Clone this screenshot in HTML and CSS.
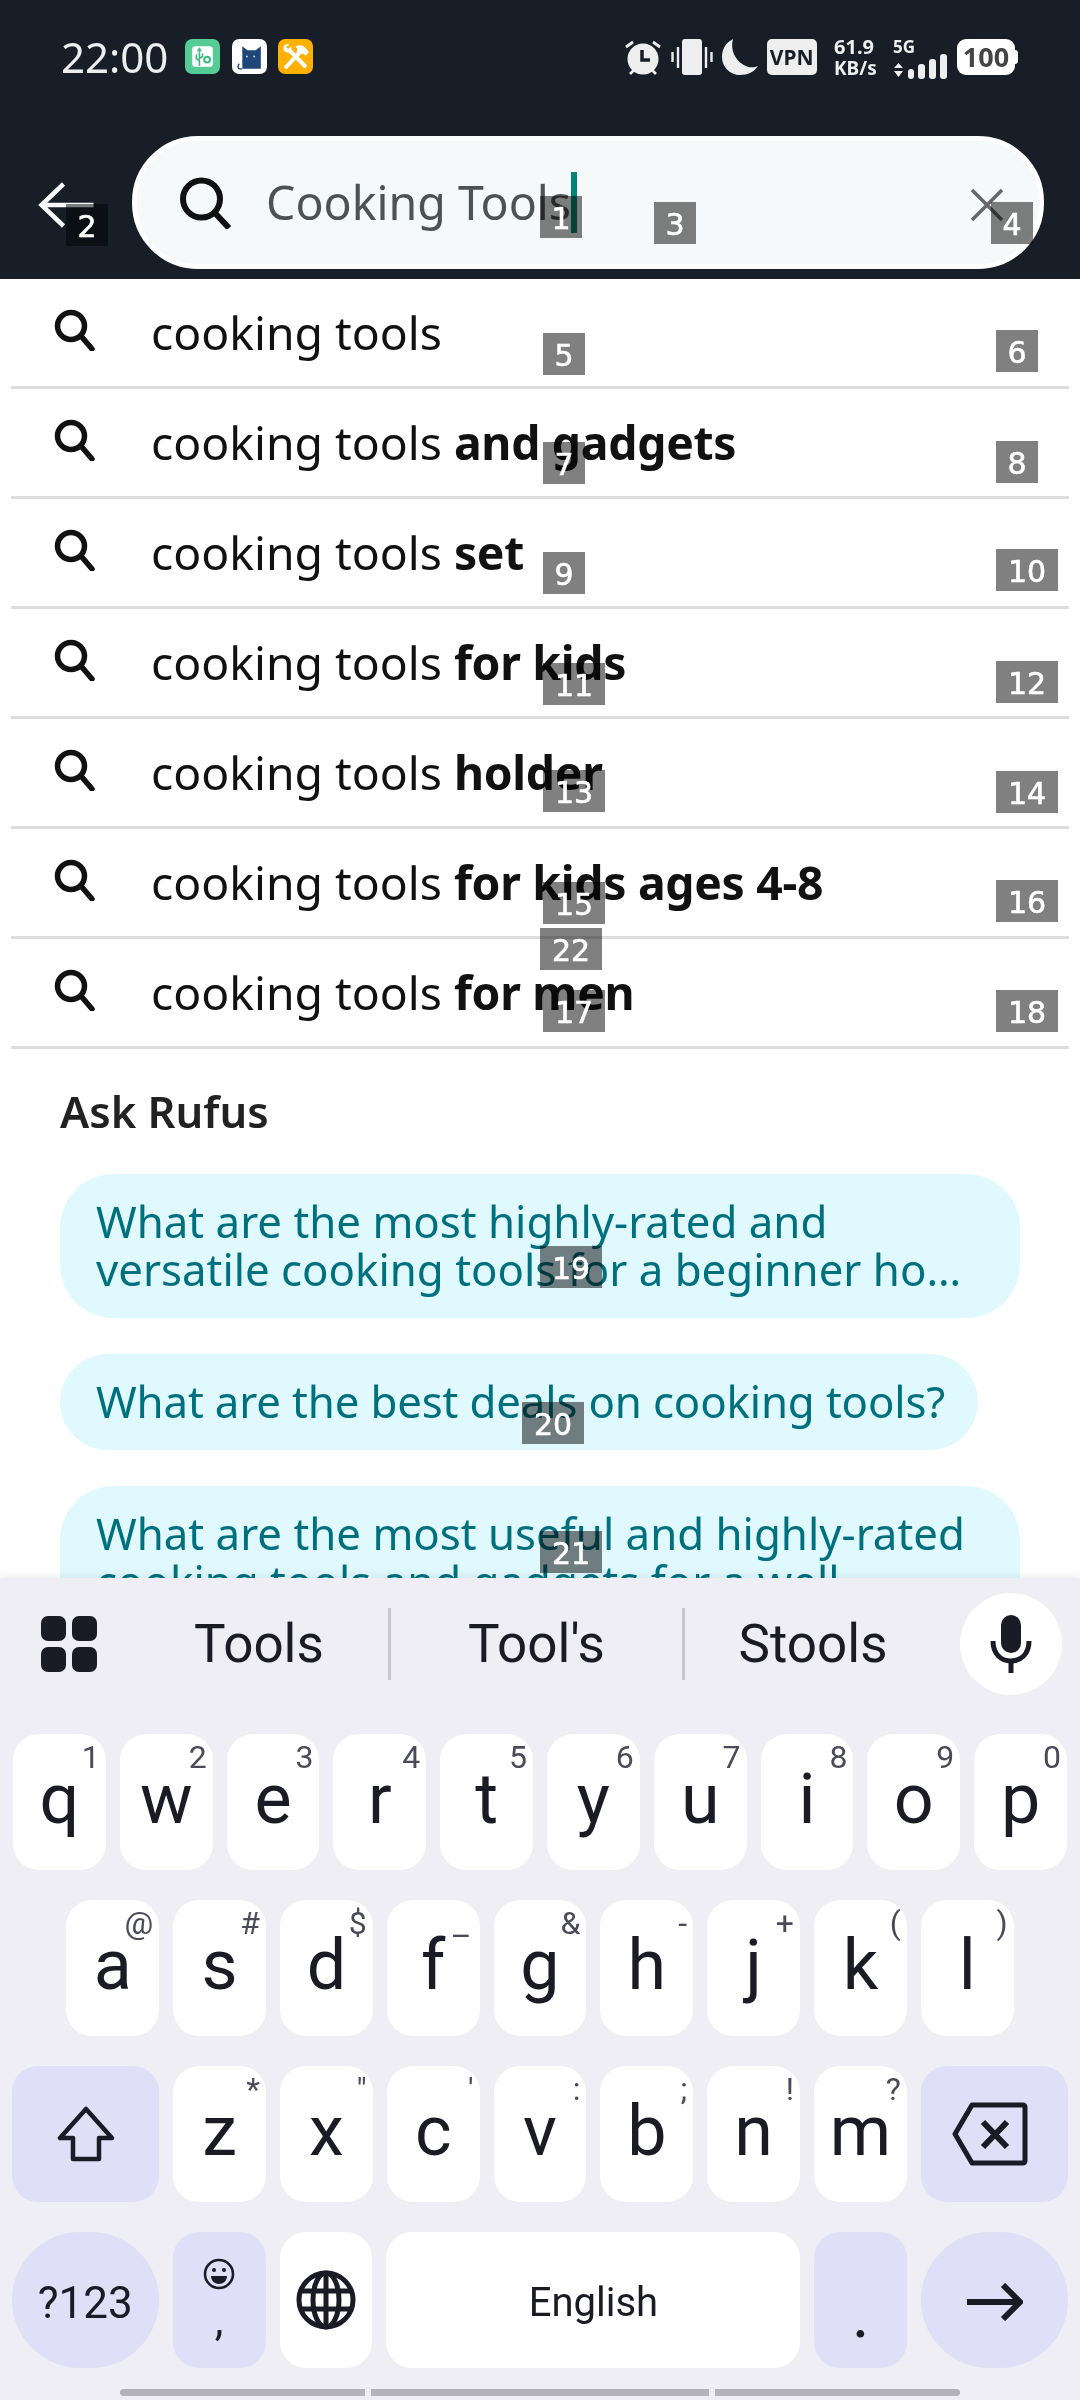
FILE: index.html
```html
<!DOCTYPE html>
<html lang="en">
<head>
  <meta charset="UTF-8" />
  <meta name="viewport" content="width=device-width, initial-scale=1.0"/>
  <title>Search</title>
  <link rel="stylesheet" href="styles.css">
</head>
<body>
<div class="phone">

  <header class="top">
    <div class="status">
      <span class="time">22:00</span>
      <svg class="app" viewBox="0 0 34 34"><rect width="34" height="34" rx="7" fill="#55cc96"/><rect x="7" y="7" width="20" height="20" rx="3" fill="#fff"/><path d="M14 12v14M11 15v4l3 2M17 14v3l-3 2" fill="none" stroke="#3fb984" stroke-width="1.6"/><path d="M14 8l-2.500 4h5z" fill="#3fb984"/><circle cx="21.500" cy="20" r="2.800" fill="none" stroke="#3fb984" stroke-width="2"/></svg>
      <svg class="app" viewBox="0 0 34 34"><rect width="34" height="34" rx="7" fill="#fff"/><path d="M10 29V7l5 4h8l5-4v22z" fill="#1f4579"/><path d="M10 29H8c-2 0-3-2-1-5" fill="none" stroke="#1f4579" stroke-width="1.400"/><circle cx="14.500" cy="17" r=".9" fill="#cfe0f2"/><circle cx="21.500" cy="17" r=".9" fill="#cfe0f2"/></svg>
      <svg class="app" viewBox="0 0 34 34"><rect width="34" height="34" rx="7" fill="#ffb000"/><path d="M11 11l15 15M8 27l14-15" stroke="#fff" stroke-width="4" stroke-linecap="round"/><path d="M5 9c0-3 3-5 6-4l-3 3 2 2 3-3c1 3-1 6-4 6-2 0-4-2-4-4z" fill="#fff"/><path d="M17 7c4-2 8-1 11 3l2 3-3 3-3-2-3 1-3-3 1-2z" fill="#fff"/></svg>
      <div class="status-right">
        <svg class="ic-alarm" viewBox="0 0 38 36"><circle cx="19" cy="20" r="15.500" fill="#eee"/><path d="M18 11v10h8" fill="none" stroke="#171e27" stroke-width="3.500"/><path d="M2 8l7-5M36 8l-7-5M6 35l4-4M32 35l-4-4" stroke="#eee" stroke-width="2.800"/></svg>
        <svg class="ic-vibe" viewBox="0 0 42 36"><rect x="11" y="0" width="20" height="36" rx="3" fill="#eee"/><path d="M1.500 13v10M7 8v21M35 8v21M40.500 13v10" stroke="#eee" stroke-width="2.400"/></svg>
        <svg class="ic-moon" viewBox="0 0 36 36"><path d="M11 0C3 4 0 11 0 18c0 10 8 18 18 18 8 0 14-3 18-9C24 33 6 18 11 0z" fill="#eee"/></svg>
        <span class="vpn">VPN</span>
        <span class="speed">61.9<br><small>KB/s</small></span>
        <div class="net">
          <span class="net-g">5G</span>
          <svg class="ic-signal" viewBox="0 0 54 25"><path d="M1 14l4.500-5 4.500 5zM1 17h9l-4.500 6z" fill="#eee"/><rect x="15" y="15" width="6" height="10" rx="3" fill="#eee"/><rect x="25" y="10" width="7" height="15" rx="3" fill="#eee"/><rect x="36" y="5" width="7" height="20" rx="3" fill="#eee"/><rect x="47" y="0" width="7" height="25" rx="3" fill="#eee"/></svg>
        </div>
        <span class="battery">100</span>
      </div>
    </div>

    <div class="searchrow">
      <svg class="back" viewBox="0 0 56 46"><path d="M25 2L3 23l22 21M3 23h52" fill="none" stroke="#f5f9fa" stroke-width="4.500"/></svg>
      <div class="searchbox">
        <svg class="ic-search" viewBox="0 0 52 52"><circle cx="21.500" cy="22" r="18.500" fill="none" stroke="#111" stroke-width="6"/><path d="M34 35l15 16" stroke="#111" stroke-width="6"/></svg>
        <span class="query">Cooking Tools</span><span class="caret"></span>
        <svg class="clear" viewBox="0 0 34 34"><path d="M2 2l30 30M32 2L2 32" stroke="#666" stroke-width="3.500"/></svg>
      </div>
    </div>
  </header>

  <main class="content">
    <ul class="suggest">
      <li><svg viewBox="0 0 42 42"><circle cx="17" cy="17" r="13.500" fill="none" stroke="#111" stroke-width="5.500"/><path d="M27 27l11 13" stroke="#111" stroke-width="5.500" stroke-linecap="round"/></svg><span>cooking tools</span></li>
      <li><svg viewBox="0 0 42 42"><circle cx="17" cy="17" r="13.500" fill="none" stroke="#111" stroke-width="5.500"/><path d="M27 27l11 13" stroke="#111" stroke-width="5.500" stroke-linecap="round"/></svg><span>cooking tools <b>and gadgets</b></span></li>
      <li><svg viewBox="0 0 42 42"><circle cx="17" cy="17" r="13.500" fill="none" stroke="#111" stroke-width="5.500"/><path d="M27 27l11 13" stroke="#111" stroke-width="5.500" stroke-linecap="round"/></svg><span>cooking tools <b>set</b></span></li>
      <li><svg viewBox="0 0 42 42"><circle cx="17" cy="17" r="13.500" fill="none" stroke="#111" stroke-width="5.500"/><path d="M27 27l11 13" stroke="#111" stroke-width="5.500" stroke-linecap="round"/></svg><span>cooking tools <b>for kids</b></span></li>
      <li><svg viewBox="0 0 42 42"><circle cx="17" cy="17" r="13.500" fill="none" stroke="#111" stroke-width="5.500"/><path d="M27 27l11 13" stroke="#111" stroke-width="5.500" stroke-linecap="round"/></svg><span>cooking tools <b>holder</b></span></li>
      <li><svg viewBox="0 0 42 42"><circle cx="17" cy="17" r="13.500" fill="none" stroke="#111" stroke-width="5.500"/><path d="M27 27l11 13" stroke="#111" stroke-width="5.500" stroke-linecap="round"/></svg><span>cooking tools <b>for kids ages 4-8</b></span></li>
      <li><svg viewBox="0 0 42 42"><circle cx="17" cy="17" r="13.500" fill="none" stroke="#111" stroke-width="5.500"/><path d="M27 27l11 13" stroke="#111" stroke-width="5.500" stroke-linecap="round"/></svg><span>cooking tools <b>for men</b></span></li>
    </ul>
    <h2 class="rufus-title">Ask Rufus</h2>
    <div class="pills">
      <div class="pill">What are the most highly-rated and<br>versatile cooking tools for a beginner ho…</div>
      <div class="pill">What are the best deals on cooking tools?</div>
      <div class="pill">What are the most useful and highly-rated<br>cooking tools and gadgets for a well…</div>
    </div>
  </main>

  <section class="keyboard">
    <div class="kb-top">
      <svg class="ic-grid" viewBox="0 0 56 56"><rect width="25" height="25" rx="7" fill="#1a1b24"/><rect x="31" width="25" height="25" rx="7" fill="#1a1b24"/><rect y="31" width="25" height="25" rx="7" fill="#1a1b24"/><rect x="31" y="31" width="25" height="25" rx="7" fill="#1a1b24"/></svg>
      <span class="word w1">Tools</span>
      <span class="word w2">Tool's</span>
      <span class="word w3">Stools</span>
      <div class="mic"><svg viewBox="0 0 42 58"><rect x="11" y="0" width="20" height="38" rx="10" fill="#1a1b24"/><path d="M3 26c0 13 8 20 18 20s18-7 18-20" fill="none" stroke="#1a1b24" stroke-width="5"/><path d="M21 46v12" stroke="#1a1b24" stroke-width="5"/></svg></div>
    </div>

    <div class="kb-row">
      <div class="key">q<i>1</i></div><div class="key">w<i>2</i></div><div class="key">e<i>3</i></div><div class="key">r<i>4</i></div><div class="key">t<i>5</i></div><div class="key">y<i>6</i></div><div class="key">u<i>7</i></div><div class="key">i<i>8</i></div><div class="key">o<i>9</i></div><div class="key">p<i>0</i></div>
    </div>
    <div class="kb-row">
      <div class="key">a<i>@</i></div><div class="key">s<i>#</i></div><div class="key">d<i>$</i></div><div class="key">f<i class="low">–</i></div><div class="key">g<i>&amp;</i></div><div class="key">h<i>-</i></div><div class="key">j<i>+</i></div><div class="key">k<i>(</i></div><div class="key">l<i>)</i></div>
    </div>
    <div class="kb-row">
      <div class="key fn wide"><svg class="ic-shift" viewBox="0 0 60 56"><path d="M30 3L4 32h13v21h26V32h13z" fill="none" stroke="#1a1b24" stroke-width="4.500" stroke-linejoin="round"/></svg></div>
      <div class="key">z<i>*</i></div><div class="key">x<i>"</i></div><div class="key">c<i>'</i></div><div class="key">v<i>:</i></div><div class="key">b<i>;</i></div><div class="key">n<i>!</i></div><div class="key">m<i>?</i></div>
      <div class="key fn wide"><svg class="ic-del" viewBox="0 0 76 64"><path d="M20 3h51a2 2 0 0 1 2 2v54a2 2 0 0 1-2 2H20L3 32z" fill="none" stroke="#1a1b24" stroke-width="5" stroke-linejoin="round"/><path d="M31 20l24 25M55 20L31 45" stroke="#1a1b24" stroke-width="6"/></svg></div>
    </div>
    <div class="kb-row">
      <div class="key fn wide round small">?123</div>
      <div class="key fn emoji">
        <svg viewBox="0 0 32 32"><circle cx="16" cy="16" r="14" fill="none" stroke="#1a1b24" stroke-width="2.600"/><circle cx="11" cy="12" r="2" fill="#1a1b24"/><circle cx="21" cy="12" r="2" fill="#1a1b24"/><path d="M8 18h16c0 5-4 8-8 8s-8-3-8-8z" fill="#1a1b24"/></svg>
        <span>,</span>
      </div>
      <div class="key"><svg class="ic-globe" viewBox="0 0 60 60"><g fill="none" stroke="#1a1b24" stroke-width="5"><circle cx="30" cy="30" r="27"/><ellipse cx="30" cy="30" rx="13" ry="27"/><path d="M30 3v54M4 21h52M4 39h52"/></g></svg></div>
      <div class="key space">English</div>
      <div class="key fn dot"><span>.</span></div>
      <div class="key fn wide round"><svg class="ic-enter" viewBox="0 0 56 38"><path d="M0 19h52M36 2l17 17-17 17" fill="none" stroke="#1a1b24" stroke-width="6"/></svg></div>
    </div>

    <div class="navbar"><span class="nav1"></span><span class="nav2"></span><span class="nav3"></span></div>
  </section>

  <!-- numbered boxes lying over the shot -->
  <span class="tag t1"><b>1</b></span><span class="tag t2"><b>2</b></span><span class="tag t3"><b>3</b></span><span class="tag t4"><b>4</b></span>
  <span class="tag t5"><b>5</b></span><span class="tag t6"><b>6</b></span><span class="tag t7"><b>7</b></span><span class="tag t8"><b>8</b></span>
  <span class="tag t9"><b>9</b></span><span class="tag t10 two"><b>10</b></span><span class="tag t11 two"><b>11</b></span><span class="tag t12 two"><b>12</b></span>
  <span class="tag t13 two"><b>13</b></span><span class="tag t14 two"><b>14</b></span><span class="tag t15 two"><b>15</b></span><span class="tag t16 two"><b>16</b></span>
  <span class="tag t17 two"><b>17</b></span><span class="tag t18 two"><b>18</b></span><span class="tag t19 two"><b>19</b></span><span class="tag t20 two"><b>20</b></span>
  <span class="tag t21 two"><b>21</b></span><span class="tag t22 two"><b>22</b></span>

</div>
</body>
</html>
```

FILE: styles.css
```css
* { box-sizing: border-box; margin: 0; padding: 0; }
html, body { width: 1080px; height: 2400px; overflow: hidden; background: #fff; font-family: "Noto Sans", sans-serif; }
.phone { position: relative; width: 1080px; height: 2400px; display: flex; flex-direction: column; overflow: hidden; }

/* —— header —— */
.top { flex: 0 0 279px; background: #171e27; }
.status { height: 136px; padding: 39px 0 0 61px; display: flex; align-items: flex-start; }
.time { width: 124px; font-size: 42px; line-height: 36px; color: #eee; }
.app { width: 35px; height: 35px; margin-right: 11.500px; }
.status-right { position: absolute; top: 39px; left: 624px; width: 396px; height: 36px; display: flex; align-items: center; }
.ic-alarm { width: 38px; height: 36px; margin-right: 9px; }
.ic-vibe { width: 42px; height: 36px; margin-right: 9px; }
.ic-moon { width: 36px; height: 36px; margin-right: 9px; }
.vpn { width: 49.500px; height: 36px; background: #eee; color: #171e27; border-radius: 5px; font-size: 21px; font-weight: 700; line-height: 36px; text-align: center; margin-right: 17.500px; }
.speed { width: 59px; color: #eee; font-size: 20px; font-weight: 700; line-height: 21px; }
.speed small { font-size: 19px; }
.net { width: 53px; height: 36px; margin-right: 11px; display: flex; flex-direction: column; justify-content: space-between; }
.net-g { color: #eee; font-size: 17px; font-weight: 700; line-height: 14px; margin-top: 1px; }
.ic-signal { width: 54px; height: 25px; flex: none; }
.battery { width: 58px; height: 36px; background: #fff; color: #444; border-radius: 9px; font-size: 27px; font-weight: 700; line-height: 35px; text-align: center; position: relative; }
.battery::after { content: ""; position: absolute; left: 58px; top: 11px; width: 3px; height: 14px; background: #fff; border-radius: 0 3px 3px 0; }

.searchrow { height: 133px; display: flex; align-items: center; padding-left: 38px; }
.back { width: 57px; height: 46px; margin-right: 37px; flex: none; margin-top: 4px; }
.searchbox { width: 912px; height: 133px; border: 5px solid #fff; border-radius: 66px; background: #f5f9fa; display: flex; align-items: center; padding-left: 43px; position: relative; }
.ic-search { width: 52px; height: 52px; margin-right: 34px; flex: none; }
.query { font-size: 46.500px; color: #4d5254; line-height: 60px; margin-top: -2px; }
.caret { width: 6px; height: 61px; background: #008577; }
.clear { position: absolute; left: 833px; top: 47px; width: 34px; height: 34px; }

/* —— suggestions —— */
.content { flex: 1; overflow: hidden; }
.suggest { list-style: none; padding: 0 11px; }
.suggest li { height: 110px; border-bottom: 3px solid #ddd; display: flex; align-items: center; padding-left: 43px; }
.suggest li svg { width: 42px; height: 42px; margin-right: 55px; flex: none; margin-top: -6px; }
.suggest li span { font-size: 46.300px; color: #111; }
.suggest li b { font-weight: 700; letter-spacing: -.3px; }

.rufus-title { font-size: 43.500px; font-weight: 600; color: #222; padding: 35px 0 0 60px; line-height: 54px; }
.pills { padding: 36px 0 0 60px; display: flex; flex-direction: column; align-items: flex-start; gap: 36px; }
.pill { background: #dff9ff; color: #00707f; font-size: 43.800px; line-height: 48px; padding: 23px 33px 25px 36px; border-radius: 54px; max-width: 960px; white-space: nowrap; }
.pill:nth-child(2) { letter-spacing: -.15px; }
.pill:first-child, .pill:last-child { width: 960px; }

/* —— keyboard —— */
.keyboard { flex: 0 0 822px; background: #eeeef4; position: relative; box-shadow: 0 -4px 8px rgba(0,0,0,.05); padding-top: 15px; font-family: Roboto, sans-serif; color: #1a1b24; }
.kb-top { height: 141px; display: flex; align-items: flex-start; position: relative; }
.ic-grid { width: 56px; height: 56px; margin: 23px 0 0 41px; }
.word { font-size: 53px; height: 72px; line-height: 72px; text-align: center; margin-top: 15px; }
.w1 { width: 294px; padding-left: 33px; border-right: 3px solid #c6c6d0; }
.w2 { width: 294px; border-right: 3px solid #c6c6d0; }
.w3 { width: 256px; }
.mic { width: 102px; height: 102px; border-radius: 50%; background: #fff; position: absolute; left: 960px; top: 0; display: flex; align-items: center; justify-content: center; }
.mic svg { width: 42px; height: 58px; }

.kb-row { height: 136px; margin-bottom: 30px; display: flex; justify-content: center; gap: 14px; }
.key { position: relative; flex: 0 0 92.800px; height: 136px; background: #fff; border-radius: 26px; font-size: 70px; line-height: 1; display: flex; align-items: center; justify-content: center; padding-bottom: 6px; }
.key i { position: absolute; top: 7px; right: 6px; font-style: normal; font-size: 32px; line-height: 32px; color: #4a4a58; }
.key i.low { top: 20px; right: 8px; }
.fn { background: #dfe0f8; }
.wide { flex-basis: 147px; }
.round { border-radius: 68px; }
.small { font-size: 44px; padding: 5px 0 0; }
.ic-shift { width: 60px; height: 56px; margin-top: 6px; }
.ic-del { width: 76px; height: 64px; margin: 6px 8px 0 0; }
.ic-globe { width: 60px; height: 60px; margin-top: 6px; }
.ic-enter { width: 56px; height: 38px; margin-top: 10px; }
.emoji { flex-direction: column; padding: 0; font-size: 44px; justify-content: flex-start; }
.emoji svg { width: 32px; height: 32px; margin-top: 26px; flex: none; }
.emoji span { line-height: 44px; margin-top: 8px; }
.space { flex-basis: 414px; font-size: 40px; padding: 5px 0 0; }
.dot span { font-size: 68px; margin-top: 34px; }
.navbar { position: absolute; left: 120px; top: 811px; display: flex; gap: 6px; }
.navbar span { height: 7px; background: #b2b2b8; }
.nav1 { width: 245px; border-radius: 4px 0 0 4px; }
.nav2 { width: 338px; }
.nav3 { width: 245px; border-radius: 0 4px 4px 0; }

/* —— number tags —— */
.tag { position: absolute; width: 42px; height: 42px; }
.tag::before { content: ""; position: absolute; inset: 0; background: #808080; mix-blend-mode: multiply; }
.tag b { position: absolute; inset: 0; color: #fff; font: 400 30px/45px "DejaVu Sans", sans-serif; -webkit-text-stroke: .6px #fff; text-align: center; }
.two { width: 62px; }
.t1 { left: 540px; top: 196px; }
.t2 { left: 66px; top: 204px; }
.t3 { left: 654px; top: 202px; }
.t4 { left: 991px; top: 202px; }
.t5 { left: 543px; top: 333px; }
.t6 { left: 996px; top: 330px; }
.t7 { left: 543px; top: 442px; }
.t8 { left: 996px; top: 441px; }
.t9 { left: 543px; top: 552px; }
.t10 { left: 996px; top: 549px; }
.t11 { left: 543px; top: 663px; }
.t12 { left: 996px; top: 661px; }
.t13 { left: 543px; top: 770px; }
.t14 { left: 996px; top: 771px; }
.t15 { left: 543px; top: 882px; }
.t16 { left: 996px; top: 880px; }
.t17 { left: 543px; top: 990px; }
.t18 { left: 996px; top: 990px; }
.t19 { left: 540px; top: 1246px; }
.t20 { left: 522px; top: 1402px; }
.t21 { left: 540px; top: 1531px; }
.t22 { left: 540px; top: 928px; }
```
